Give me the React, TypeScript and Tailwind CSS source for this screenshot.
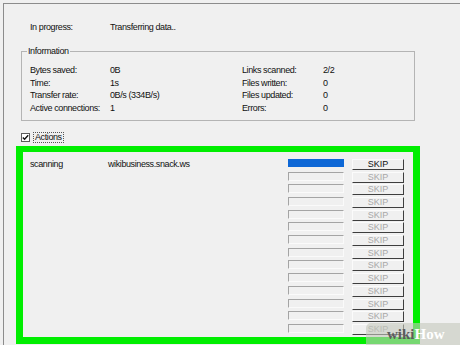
import React from "react";

const rows = Array.from({ length: 14 }, (_, i) => i);

export default function App() {
  return (
    <div
      className="relative w-[460px] h-[345px] overflow-hidden bg-[#f0f0f0] text-[#111] text-[9px] leading-[12.5px] tracking-[-0.4px]"
      style={{ fontFamily: '"Liberation Sans", Arial, sans-serif' }}
    >
      <div className="mt-[3px] ml-[3px] h-[400px] border-t border-l border-[#8c8c8c]">
        {/* In progress */}
        <div className="mt-[17px] pl-[26px] grid grid-cols-[80px_auto] leading-[12px]">
          <span>In progress:</span>
          <span>Transferring data..</span>
        </div>

        {/* Information group */}
        <fieldset className="mt-[12px] ml-[17px] w-[394px] border border-[#b4b4b4] pl-[5px] pb-[6px]">
          <legend className="px-[1px] leading-[12px]">Information</legend>
          <div className="pt-[7px] pl-[3px] grid grid-cols-[80px_132px_81px_auto] leading-[12.5px]">
            <span>Bytes saved:</span>
            <span>0B</span>
            <span>Links scanned:</span>
            <span>2/2</span>
            <span>Time:</span>
            <span>1s</span>
            <span>Files written:</span>
            <span>0</span>
            <span>Transfer rate:</span>
            <span>0B/s (334B/s)</span>
            <span>Files updated:</span>
            <span>0</span>
            <span>Active connections:</span>
            <span>1</span>
            <span>Errors:</span>
            <span>0</span>
          </div>
        </fieldset>

        {/* Actions checkbox */}
        <div className="mt-[11px] ml-[17px] flex items-center h-[10px]">
          <div className="w-[9px] h-[9px] border border-[#5a5a5a] bg-white flex items-center justify-center">
            <svg width="7" height="7" viewBox="0 0 7 7">
              <path d="M0.8 3.4 L2.6 5.3 L6.2 1.2" fill="none" stroke="#111" strokeWidth="1.4" />
            </svg>
          </div>
          <span className="ml-[3px] px-[1px] border border-dotted border-[#555] leading-[9px] h-[11px]">
            Actions
          </span>
        </div>

        {/* Green highlighted box */}
        <div className="mt-[4px] ml-[12px] w-[404px] h-[198px] border-[7px] border-t-[6px] border-[#00ee00]">
          <div className="pt-[5.6px] flex flex-col">
            {rows.map((i) => (
              <div key={i} className="h-[12.7px] flex items-center">
                <span className="w-[85px] pl-[7px] shrink-0">{i === 0 ? "scanning" : ""}</span>
                <span className="w-[180px] shrink-0">{i === 0 ? "wikibusiness.snack.ws" : ""}</span>
                {i === 0 ? (
                  <div className="w-[56px] h-[8px] mb-[1px] bg-[#0d67d6] shrink-0" />
                ) : (
                  <div className="w-[56px] h-[9px] mb-[1px] border-t border-l border-[#a4a4a4] border-b border-r border-b-[#fafafa] border-r-[#fafafa] shrink-0" />
                )}
                <div
                  className={
                    "ml-[8px] w-[52px] h-[11px] mt-[1px] shrink-0 flex items-center justify-center border-b border-r border-[#3e3e3e] border-t border-l border-t-[#fbfbfb] border-l-[#fbfbfb] tracking-[0px] " +
                    (i === 0 ? "text-[#111]" : "text-[#a8a8a8]")
                  }
                >
                  <span className="leading-[9px]">SKIP</span>
                </div>
              </div>
            ))}
          </div>
        </div>
      </div>

      {/* wikiHow watermark */}
      <div className="absolute right-0 bottom-0 w-[94px] h-[22px] bg-[#c4c8bc]/60 rounded-tl-[5px] flex items-center pl-[21px]">
        <span
          className="text-[15px] font-bold tracking-[0px] leading-[15px]"
          style={{ fontFamily: '"Liberation Serif", "DejaVu Serif", serif' }}
        >
          <span className="text-[#5c5c5c]">wiki</span>
          <span className="text-white">How</span>
        </span>
      </div>
    </div>
  );
}
